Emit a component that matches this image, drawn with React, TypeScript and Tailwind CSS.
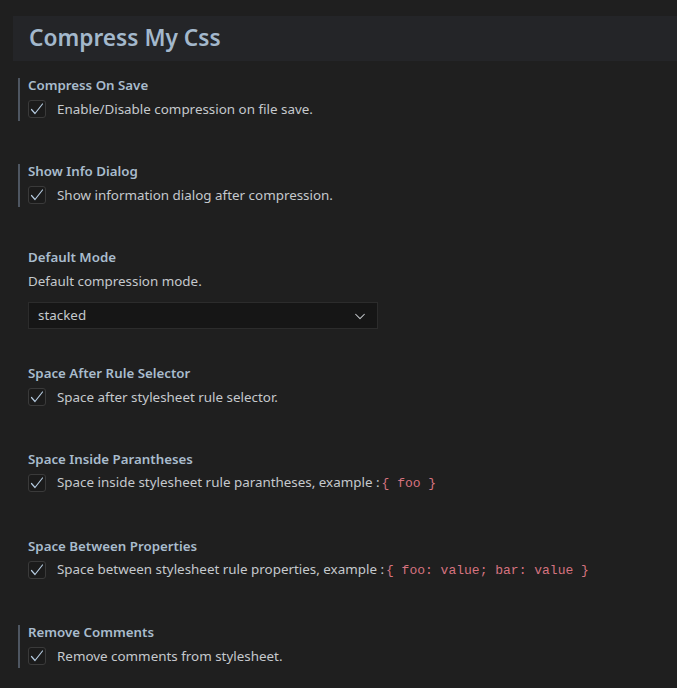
import React from "react";

const font = { fontFamily: '"Noto Sans", "Liberation Sans", sans-serif' };

function Check() {
  return (
    <div className="w-[18px] h-[18px] shrink-0 rounded-[3px] border border-[#3a3a3a] bg-[#1b1b1b] flex items-center justify-center">
      <svg width="16" height="16" viewBox="0 0 16 16" fill="none">
        <path d="M2.5 8.5 L6 12.5 L13.5 3" stroke="#b5cbe0" strokeWidth="1.2" strokeLinecap="round" strokeLinejoin="round" />
      </svg>
    </div>
  );
}

function Code({ children }: { children: React.ReactNode }) {
  return (
    <span className="text-[#d6737f] text-[13px] px-[2px]" style={{ fontFamily: '"Liberation Mono", monospace' }}>
      {children}
    </span>
  );
}

function BoolItem({ title, desc, marked, mt }: { title: string; desc: React.ReactNode; marked?: boolean; mt: string }) {
  return (
    <div className={`${mt} ml-[18px] border-l-2 ${marked ? "border-[#4e5661]" : "border-transparent"} pl-[8px] pb-[3px]`}>
      <div className="text-[13.3px] leading-[14px] font-semibold text-[#a9bccd]">{title}</div>
      <div className="mt-[8px] h-[18px] flex items-center">
        <Check />
        <div className="ml-[11px] text-[13.4px] text-[#c5c9cd] whitespace-nowrap">{desc}</div>
      </div>
    </div>
  );
}

export default function App() {
  return (
    <div className="w-[677px] h-[688px] bg-[#1f1f1f] overflow-hidden pt-[16px]" style={font}>
      <div className="ml-[13px] h-[45px] bg-[#242528] flex items-center pl-[16px]">
        <span className="text-[22.7px] font-semibold text-[#a3b8cc] leading-none">Compress My Css</span>
      </div>
      <BoolItem mt="mt-[17px]" marked title="Compress On Save" desc="Enable/Disable compression on file save." />
      <BoolItem mt="mt-[43px]" marked title="Show Info Dialog" desc="Show information dialog after compression." />
      <div className="mt-[43px] ml-[18px] border-l-2 border-transparent pl-[8px]">
        <div className="text-[13.3px] leading-[14px] font-semibold text-[#a9bccd]">Default Mode</div>
        <div className="mt-[8px] h-[18px] flex items-center text-[13.4px] text-[#c5c9cd]">Default compression mode.</div>
        <div className="mt-[12px] w-[350px] h-[27px] bg-[#161616] border border-[#2c2c2c] flex items-center justify-between pl-[9px] pr-[10px]">
          <span className="text-[13.4px] text-[#c5c9cd]">stacked</span>
          <svg width="14" height="14" viewBox="0 0 16 16" fill="none">
            <path d="M3 6 L8 11 L13 6" stroke="#c5c9cd" strokeWidth="1.2" strokeLinecap="round" strokeLinejoin="round" />
          </svg>
        </div>
      </div>
      <BoolItem mt="mt-[37px]" title="Space After Rule Selector" desc="Space after stylesheet rule selector." />
      <BoolItem mt="mt-[43px]" title="Space Inside Parantheses" desc={<>Space inside stylesheet rule parantheses, example :<Code>{"{ foo }"}</Code></>} />
      <BoolItem mt="mt-[44px]" title="Space Between Properties" desc={<>Space between stylesheet rule properties, example :<Code>{"{ foo: value; bar: value }"}</Code></>} />
      <BoolItem mt="mt-[43px]" marked title="Remove Comments" desc="Remove comments from stylesheet." />
    </div>
  );
}
